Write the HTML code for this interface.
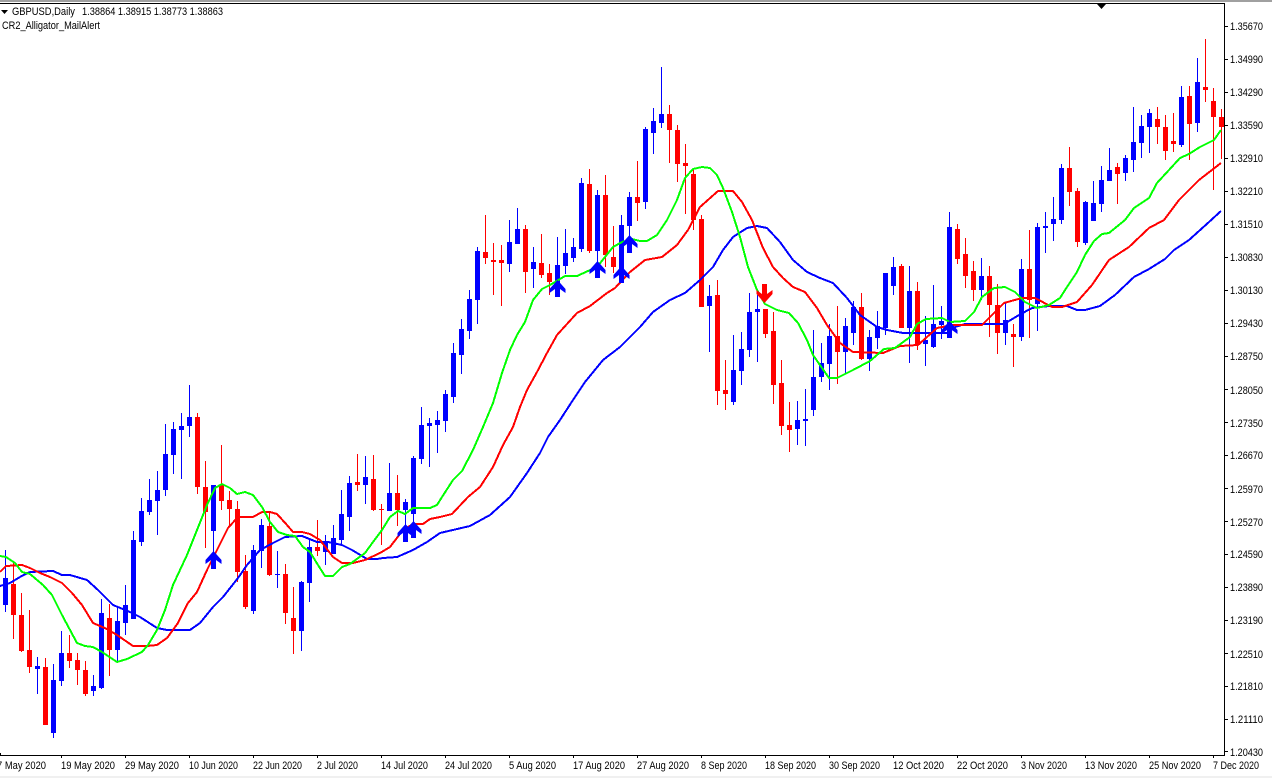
<!DOCTYPE html>
<html><head><meta charset="utf-8"><title>GBPUSD,Daily</title>
<style>
html,body{margin:0;padding:0;background:#fff;width:1272px;height:778px;overflow:hidden}
svg{display:block}
text{font-family:"Liberation Sans",sans-serif;font-size:11px;fill:#000}
</style></head><body>
<svg width="1272" height="778" viewBox="0 0 1272 778" xmlns="http://www.w3.org/2000/svg">
<rect width="1272" height="778" fill="#fff"/>
<rect width="1272" height="2" fill="#a0a0a0"/>
<rect y="776" width="1272" height="2" fill="#f0f0f0"/>
<g shape-rendering="crispEdges" fill="none">
<path stroke="#0000ff" stroke-width="1" d="M5.5 550V612M37.5 657V694M53.5 664V738M61.5 631V686M93.5 675V696M101.5 599V689M117.5 608V662M125.5 585V635M133.5 531V619M141.5 498V546M149.5 479V515M157.5 471V535M165.5 424V496M173.5 422V474M181.5 413V479M189.5 385V437M213.5 485V560M253.5 545V614M261.5 519V568M277.5 551V588M301.5 581V651M309.5 540V602M325.5 535V565M333.5 525V554M341.5 490V545M349.5 476V531M365.5 456V504M389.5 463V511M405.5 499V540M413.5 456V527M421.5 407V464M429.5 418V467M437.5 411V453M445.5 390V432M453.5 343V403M461.5 319V374M469.5 290V339M477.5 247V324M509.5 220V272M517.5 208V244M533.5 247V288M557.5 237V297M565.5 229V274M573.5 238V262M581.5 178V252M597.5 190V273M621.5 215V283M629.5 192V247M645.5 127V209M653.5 108V154M661.5 67V128M709.5 285V352M733.5 335V405M741.5 332V385M749.5 293V357M757.5 295V362M797.5 401V445M805.5 389V446M813.5 330V416M821.5 343V382M829.5 324V390M845.5 318V373M853.5 301V345M869.5 330V371M877.5 311V349M885.5 273V335M893.5 257V295M909.5 266V363M925.5 316V366M933.5 285V348M941.5 306V339M949.5 212V335M981.5 258V300M1005.5 303V345M1021.5 259V341M1037.5 223V331M1045.5 212V253M1053.5 197V241M1061.5 164V224M1085.5 201V245M1093.5 181V221M1101.5 166V212M1109.5 148V181M1125.5 155V181M1133.5 107V172M1141.5 115V158M1149.5 109V153M1181.5 86V147M1197.5 58V132"/>
<path stroke="#0000ff" stroke-width="5" d="M5.5 578V605M37.5 666V669M53.5 680V733M61.5 653V681M93.5 686V691M101.5 613V688M117.5 621V650M125.5 605V623M133.5 540V619M141.5 511V542M149.5 500V512M157.5 490V501M165.5 454V490M173.5 429V455M181.5 426V430M189.5 417V426M213.5 485V531M253.5 550V611M261.5 525V551M277.5 574V575M301.5 582V631M309.5 547V583M325.5 542V552M333.5 538V554M341.5 514V540M349.5 483V517M365.5 477V485M389.5 493V511M405.5 502V510M413.5 458V514M421.5 425V459M429.5 423V426M437.5 420V425M445.5 394V421M453.5 353V397M461.5 329V355M469.5 299V331M477.5 251V300M509.5 242V264M517.5 229V244M533.5 262V269M557.5 265V290M565.5 253V266M573.5 247V258M581.5 183V249M597.5 195V251M621.5 225V283M629.5 197V226M645.5 129V202M653.5 121V133M661.5 114V123M709.5 296V306M733.5 370V402M741.5 349V371M749.5 312V350M757.5 309V312M797.5 420V429M805.5 419V421M813.5 377V410M821.5 363V377M829.5 336V364M845.5 326V352M853.5 307V333M869.5 337V359M877.5 326V338M885.5 273V328M893.5 267V286M909.5 291V328M925.5 340V344M933.5 324V347M941.5 321V325M949.5 227V325M981.5 276V290M1005.5 320V333M1021.5 269V337M1037.5 227V304M1045.5 226V228M1053.5 219V224M1061.5 168V220M1085.5 202V243M1093.5 203V221M1101.5 180V204M1109.5 170V181M1125.5 158V173M1133.5 142V160M1141.5 126V143M1149.5 113V127M1181.5 97V145M1197.5 82V123"/>
<path stroke="#ff0000" stroke-width="1" d="M13.5 563V639M21.5 593V652M29.5 610V673M45.5 658V725M69.5 635V668M77.5 653V685M85.5 661V696M109.5 604V676M197.5 413V494M205.5 461V548M221.5 445V510M229.5 491V527M237.5 501V582M245.5 555V609M269.5 513V576M285.5 564V624M293.5 587V654M317.5 520V556M357.5 454V491M373.5 455V511M381.5 504V545M397.5 475V526M485.5 215V264M493.5 243V295M501.5 245V306M525.5 225V293M541.5 234V278M549.5 264V295M589.5 169V253M605.5 175V267M613.5 226V273M637.5 161V221M669.5 105V163M677.5 125V182M685.5 144V214M693.5 170V230M701.5 215V307M717.5 280V405M725.5 360V410M765.5 309V338M773.5 312V404M781.5 360V435M789.5 402V452M837.5 306V384M861.5 293V360M901.5 264V328M917.5 282V350M957.5 224V264M965.5 238V288M973.5 261V301M989.5 266V337M997.5 284V354M1013.5 324V367M1029.5 230V338M1069.5 147V206M1077.5 188V247M1117.5 163V204M1157.5 107V144M1165.5 115V160M1173.5 113V152M1189.5 86V160M1205.5 39V102M1213.5 88V190M1221.5 109V159"/>
<path stroke="#ff0000" stroke-width="5" d="M13.5 584V615M21.5 615V651M29.5 650V667M45.5 667V725M69.5 653V661M77.5 660V670M85.5 670V694M109.5 618V650M197.5 417V487M205.5 487V512M221.5 485V501M229.5 500V509M237.5 509V572M245.5 571V607M269.5 526V575M285.5 574V613M293.5 618V631M317.5 547V551M357.5 482V485M373.5 479V510M381.5 509V510M397.5 493V510M485.5 252V258M493.5 260V262M501.5 260V263M525.5 229V272M541.5 263V275M549.5 273V282M589.5 184V251M605.5 195V255M613.5 257V267M637.5 197V203M669.5 114V130M677.5 130V164M685.5 163V166M693.5 174V220M701.5 219V307M717.5 295V391M725.5 390V394M765.5 309V334M773.5 331V385M781.5 383V426M789.5 425V430M837.5 336V352M861.5 307V359M901.5 266V328M917.5 291V344M957.5 229V259M965.5 254V276M973.5 271V290M989.5 276V305M997.5 305V333M1013.5 334V337M1029.5 269V300M1069.5 168V192M1077.5 191V242M1117.5 167V174M1157.5 119V127M1165.5 127V151M1173.5 141V144M1189.5 96V124M1205.5 87V90M1213.5 101V117M1221.5 117V127"/>
<polyline stroke="#0000ff" stroke-width="2" points="0,586 10,583 20,577 30,572 53,571 62,575 70,575 87,580 98,590 113,605 130,612 140,617 157,628 167,630 190,630 200,623 213,607 223,597 238,578 247,565 260,550 273,543 285,537 302,536 317,542 328,542 342,545 352,550 367,559 377,559 383,558 397,557 413,550 427,542 440,533 470,526 490,515 510,497 527,473 540,453 548,437 560,420 573,400 585,382 603,360 620,347 640,327 653,312 670,300 685,293 700,280 713,267 723,250 733,237 747,228 757,226 767,228 780,242 793,260 807,272 820,278 833,283 847,298 860,315 877,327 887,330 903,333 947,333 955,327 965,324 1004,324 1019,315 1032,308 1049,306 1067,306 1077,310 1085,310 1100,306 1115,295 1134,277 1149,269 1165,259 1174,250 1189,240 1209,222 1221,211"/>
<polyline stroke="#ff0000" stroke-width="2" points="0,572 6,566 22,565 30,568 40,573 50,577 62,583 72,593 82,605 93,623 107,629 117,635 133,646 147,646 157,645 167,638 178,623 188,603 197,592 207,570 217,550 228,528 238,517 253,517 262,512 270,512 277,514 287,525 293,532 302,532 310,534 320,540 333,557 342,563 353,563 365,560 380,553 390,547 403,530 413,524 423,524 430,519 440,517 452,514 468,497 480,487 493,467 503,445 513,427 520,407 527,390 537,372 547,353 557,335 577,313 590,306 607,293 615,288 630,272 645,260 662,257 677,245 688,230 700,207 718,191 733,191 742,202 752,220 763,248 773,267 783,278 793,287 805,292 817,308 827,325 840,343 853,352 883,353 900,346 918,345 937,328 952,325 982,325 992,315 1004,303 1022,298 1035,298 1052,307 1062,307 1077,302 1092,285 1109,260 1129,247 1149,228 1164,220 1179,200 1199,180 1221,163"/>
<polyline stroke="#00ff00" stroke-width="2" points="0,556 6,557 15,563 22,572 30,574 43,585 52,595 62,615 77,643 85,646 93,647 102,652 117,662 127,659 142,652 148,645 157,630 165,610 173,585 187,555 197,530 207,505 215,488 222,484 230,488 237,494 245,492 253,495 262,507 270,522 278,532 287,535 295,536 303,547 310,552 318,565 325,576 333,576 342,567 350,564 365,553 373,542 382,530 390,517 398,511 405,514 413,508 430,508 437,505 442,497 453,480 462,471 473,450 483,427 493,403 502,373 510,350 517,335 525,322 533,300 542,289 550,285 565,276 577,276 588,271 597,267 605,257 613,247 622,242 632,239 640,241 647,241 657,235 667,220 677,200 685,178 693,169 702,167 710,168 717,175 723,188 732,212 740,237 748,267 757,290 765,304 777,310 789,313 798,323 807,340 813,355 829,378 837,378 853,370 870,361 884,349 895,348 910,337 917,324 926,319 942,318 950,322 965,321 974,312 982,297 994,288 1005,287 1015,292 1025,302 1037,308 1049,305 1060,298 1067,287 1077,272 1085,255 1094,241 1102,234 1109,233 1125,220 1134,208 1149,198 1157,183 1169,170 1180,158 1189,154 1200,147 1214,140 1221,130"/>
</g>
<g fill="#0000ff">
<path d="M213.5 551l8 9v4l-5.5-4v9h-5v-9l-5.5 4v-4z"/>
<path d="M405.5 524l8 9v4l-5.5-4v9h-5v-9l-5.5 4v-4z"/>
<path d="M413.5 521l8 9v4l-5.5-4v8h-5v-8l-5.5 4v-4z"/>
<path d="M557.5 280l8 9v4l-5.5-4v8h-5v-8l-5.5 4v-4z"/>
<path d="M597.5 261l8 9v4l-5.5-4v8h-5v-8l-5.5 4v-4z"/>
<path d="M621.5 266l8 9v4l-5.5-4v8h-5v-8l-5.5 4v-4z"/>
<path d="M629.5 235l8 9v4l-5.5-4v9h-5v-9l-5.5 4v-4z"/>
<path d="M949.5 321l8 9v4l-5.5-4v8h-5v-8l-5.5 4v-4z"/>
</g>
<path fill="#ff0000" d="M764.5 303l8-9v-4l-5.5 4v-10h-5v10l-5.5-4v4z"/>
<g shape-rendering="crispEdges" fill="#000">
<rect y="3" width="1225" height="1"/>
<rect x="1224" y="3" width="1" height="753"/>
<rect y="755" width="1225" height="1"/>
<rect y="753" width="1" height="2"/>
<path d="M61 756h1v2h-1zM125 756h1v2h-1zM189 756h1v2h-1zM253 756h1v2h-1zM317 756h1v2h-1zM381 756h1v2h-1zM445 756h1v2h-1zM509 756h1v2h-1zM573 756h1v2h-1zM637 756h1v2h-1zM701 756h1v2h-1zM765 756h1v2h-1zM829 756h1v2h-1zM893 756h1v2h-1zM957 756h1v2h-1zM1021 756h1v2h-1zM1085 756h1v2h-1zM1149 756h1v2h-1zM1213 756h1v2h-1z"/>
<path d="M1225 26h3v1h-3zM1225 59h3v1h-3zM1225 92h3v1h-3zM1225 125h3v1h-3zM1225 158h3v1h-3zM1225 191h3v1h-3zM1225 224h3v1h-3zM1225 257h3v1h-3zM1225 290h3v1h-3zM1225 323h3v1h-3zM1225 356h3v1h-3zM1225 389h3v1h-3zM1225 422h3v1h-3zM1225 455h3v1h-3zM1225 488h3v1h-3zM1225 521h3v1h-3zM1225 554h3v1h-3zM1225 587h3v1h-3zM1225 620h3v1h-3zM1225 653h3v1h-3zM1225 686h3v1h-3zM1225 719h3v1h-3zM1225 751h3v1h-3z"/>
</g>
<path fill="#000" d="M1 10h7l-3.5 4zM1097 4h9l-4.5 5z"/>
<text x="12" y="15" textLength="63" lengthAdjust="spacingAndGlyphs">GBPUSD,Daily</text>
<text x="82" y="15" textLength="141" lengthAdjust="spacingAndGlyphs">1.38864 1.38915 1.38773 1.38863</text>
<text x="2" y="29" textLength="98" lengthAdjust="spacingAndGlyphs">CR2_Alligator_MailAlert</text>
<g>
<text x="1230" y="30" textLength="33" lengthAdjust="spacingAndGlyphs">1.35670</text>
<text x="1230" y="63" textLength="33" lengthAdjust="spacingAndGlyphs">1.34990</text>
<text x="1230" y="96" textLength="33" lengthAdjust="spacingAndGlyphs">1.34290</text>
<text x="1230" y="129" textLength="33" lengthAdjust="spacingAndGlyphs">1.33590</text>
<text x="1230" y="162" textLength="33" lengthAdjust="spacingAndGlyphs">1.32910</text>
<text x="1230" y="195" textLength="33" lengthAdjust="spacingAndGlyphs">1.32210</text>
<text x="1230" y="228" textLength="33" lengthAdjust="spacingAndGlyphs">1.31510</text>
<text x="1230" y="261" textLength="33" lengthAdjust="spacingAndGlyphs">1.30830</text>
<text x="1230" y="294" textLength="33" lengthAdjust="spacingAndGlyphs">1.30130</text>
<text x="1230" y="327" textLength="33" lengthAdjust="spacingAndGlyphs">1.29430</text>
<text x="1230" y="360" textLength="33" lengthAdjust="spacingAndGlyphs">1.28750</text>
<text x="1230" y="394" textLength="33" lengthAdjust="spacingAndGlyphs">1.28050</text>
<text x="1230" y="427" textLength="33" lengthAdjust="spacingAndGlyphs">1.27350</text>
<text x="1230" y="459" textLength="33" lengthAdjust="spacingAndGlyphs">1.26670</text>
<text x="1230" y="493" textLength="33" lengthAdjust="spacingAndGlyphs">1.25970</text>
<text x="1230" y="526" textLength="33" lengthAdjust="spacingAndGlyphs">1.25270</text>
<text x="1230" y="558" textLength="33" lengthAdjust="spacingAndGlyphs">1.24590</text>
<text x="1230" y="591" textLength="33" lengthAdjust="spacingAndGlyphs">1.23890</text>
<text x="1230" y="624" textLength="33" lengthAdjust="spacingAndGlyphs">1.23190</text>
<text x="1230" y="658" textLength="33" lengthAdjust="spacingAndGlyphs">1.22510</text>
<text x="1230" y="690" textLength="33" lengthAdjust="spacingAndGlyphs">1.21810</text>
<text x="1230" y="723" textLength="33" lengthAdjust="spacingAndGlyphs">1.21110</text>
<text x="1230" y="756" textLength="33" lengthAdjust="spacingAndGlyphs">1.20430</text>
</g>
<g>
<text x="-3" y="769" textLength="49" lengthAdjust="spacingAndGlyphs">7 May 2020</text>
<text x="61" y="769" textLength="54" lengthAdjust="spacingAndGlyphs">19 May 2020</text>
<text x="125" y="769" textLength="54" lengthAdjust="spacingAndGlyphs">29 May 2020</text>
<text x="189" y="769" textLength="49" lengthAdjust="spacingAndGlyphs">10 Jun 2020</text>
<text x="253" y="769" textLength="49" lengthAdjust="spacingAndGlyphs">22 Jun 2020</text>
<text x="317" y="769" textLength="41" lengthAdjust="spacingAndGlyphs">2 Jul 2020</text>
<text x="381" y="769" textLength="47" lengthAdjust="spacingAndGlyphs">14 Jul 2020</text>
<text x="445" y="769" textLength="47" lengthAdjust="spacingAndGlyphs">24 Jul 2020</text>
<text x="509" y="769" textLength="47" lengthAdjust="spacingAndGlyphs">5 Aug 2020</text>
<text x="573" y="769" textLength="52" lengthAdjust="spacingAndGlyphs">17 Aug 2020</text>
<text x="637" y="769" textLength="52" lengthAdjust="spacingAndGlyphs">27 Aug 2020</text>
<text x="701" y="769" textLength="46" lengthAdjust="spacingAndGlyphs">8 Sep 2020</text>
<text x="765" y="769" textLength="51" lengthAdjust="spacingAndGlyphs">18 Sep 2020</text>
<text x="829" y="769" textLength="51" lengthAdjust="spacingAndGlyphs">30 Sep 2020</text>
<text x="893" y="769" textLength="51" lengthAdjust="spacingAndGlyphs">12 Oct 2020</text>
<text x="957" y="769" textLength="51" lengthAdjust="spacingAndGlyphs">22 Oct 2020</text>
<text x="1021" y="769" textLength="46" lengthAdjust="spacingAndGlyphs">3 Nov 2020</text>
<text x="1085" y="769" textLength="52" lengthAdjust="spacingAndGlyphs">13 Nov 2020</text>
<text x="1149" y="769" textLength="52" lengthAdjust="spacingAndGlyphs">25 Nov 2020</text>
<text x="1213" y="769" textLength="46" lengthAdjust="spacingAndGlyphs">7 Dec 2020</text>
</g>
</svg>
</body></html>
